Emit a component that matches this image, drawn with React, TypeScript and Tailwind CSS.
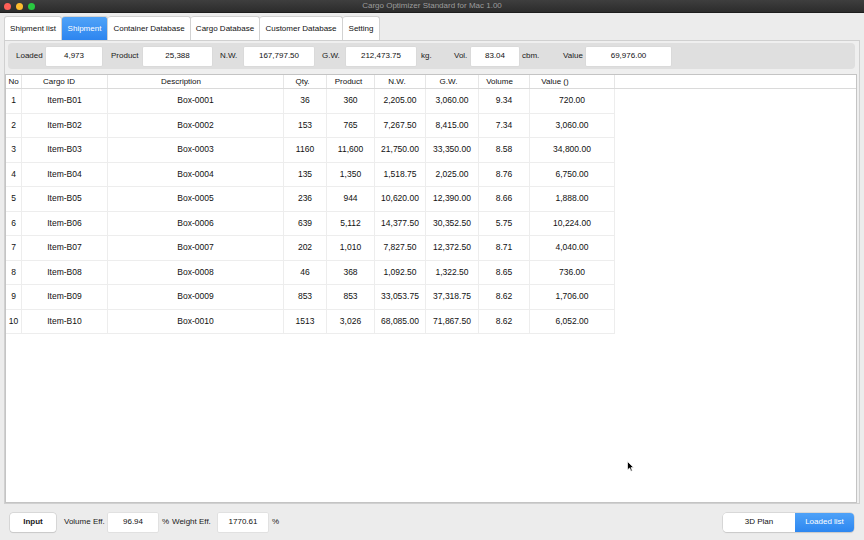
import React from "react";

const rows = [
  ["1", "Item-B01", "Box-0001", "36", "360", "2,205.00", "3,060.00", "9.34", "720.00"],
  ["2", "Item-B02", "Box-0002", "153", "765", "7,267.50", "8,415.00", "7.34", "3,060.00"],
  ["3", "Item-B03", "Box-0003", "1160", "11,600", "21,750.00", "33,350.00", "8.58", "34,800.00"],
  ["4", "Item-B04", "Box-0004", "135", "1,350", "1,518.75", "2,025.00", "8.76", "6,750.00"],
  ["5", "Item-B05", "Box-0005", "236", "944", "10,620.00", "12,390.00", "8.66", "1,888.00"],
  ["6", "Item-B06", "Box-0006", "639", "5,112", "14,377.50", "30,352.50", "5.75", "10,224.00"],
  ["7", "Item-B07", "Box-0007", "202", "1,010", "7,827.50", "12,372.50", "8.71", "4,040.00"],
  ["8", "Item-B08", "Box-0008", "46", "368", "1,092.50", "1,322.50", "8.65", "736.00"],
  ["9", "Item-B09", "Box-0009", "853", "853", "33,053.75", "37,318.75", "8.62", "1,706.00"],
  ["10", "Item-B10", "Box-0010", "1513", "3,026", "68,085.00", "71,867.50", "8.62", "6,052.00"],
];

const headers: { label: string; cls: string }[] = [
  { label: "No", cls: "justify-center" },
  { label: "Cargo ID", cls: "justify-center pr-[11px]" },
  { label: "Description", cls: "justify-center pr-[29px]" },
  { label: "Qty.", cls: "justify-center pr-[5px]" },
  { label: "Product", cls: "justify-center pr-[4px]" },
  { label: "N.W.", cls: "justify-center pr-[6px]" },
  { label: "G.W.", cls: "justify-center pr-[7px]" },
  { label: "Volume", cls: "justify-center pr-[9px]" },
  { label: "Value ()", cls: "justify-center pr-[34px]" },
];

const tabs = [
  { label: "Shipment list", w: "w-[58px]" },
  { label: "Shipment", w: "w-[46px]", active: true },
  { label: "Container Database", w: "w-[83px]" },
  { label: "Cargo Database", w: "w-[69px]" },
  { label: "Customer Database", w: "w-[83px]" },
  { label: "Setting", w: "w-[37px]" },
];

const gridCols = "grid grid-cols-[16px_86px_176px_43px_48px_51px_53px_51px_85px]";

function Field({ value, w }: { value: string; w: string }) {
  return (
    <div className={`${w} h-[19px] bg-white flex items-center justify-center text-[8px] text-[#111] rounded-[1px] shadow-[0_0_0_0.5px_#d6d6d6]`}>
      {value}
    </div>
  );
}

export default function App() {
  return (
    <div
      className="relative w-[864px] h-[540px] bg-[#ececec] flex flex-col overflow-hidden text-[#111]"
      style={{ fontFamily: '"Liberation Sans", Arial, sans-serif' }}
    >
      {/* Title bar */}
      <div className="h-[13px] grid grid-cols-[1fr_auto_1fr] items-center bg-gradient-to-b from-[#3e3e3e] to-[#2c2c2c] border-b border-[#1d1d1d]">
        <div className="flex items-center gap-[5px] pl-[4px]">
          <div className="w-[7px] h-[7px] rounded-full bg-[#fe5f57]" />
          <div className="w-[7px] h-[7px] rounded-full bg-[#febc2e]" />
          <div className="w-[7px] h-[7px] rounded-full bg-[#28c840]" />
        </div>
        <div className="text-[8px] text-[#9c9c9c] leading-none">Cargo Optimizer Standard for Mac 1.00</div>
        <div />
      </div>

      {/* Tabs */}
      <div className="mt-[3px] pl-[4px] flex h-[24px]">
        {tabs.map((t) => (
          <div
            key={t.label}
            className={`${t.w} h-full flex items-center justify-center text-[8px] border-t border-r border-[#d2d2d2] first:border-l rounded-t-[3px] ${
              t.active
                ? "bg-gradient-to-b from-[#4fa3f8] to-[#2d85ef] text-white border-[#3a8ff2]"
                : "bg-white text-[#111]"
            }`}
          >
            {t.label}
          </div>
        ))}
      </div>

      {/* Panel */}
      <div className="mx-[4px] h-[464px] border border-[#d0d0d0] bg-[#efefef] flex flex-col">
        {/* Summary bar */}
        <div className="mt-[2px] ml-[3px] mr-[4px] h-[26px] rounded-[4px] bg-[#dfdfdf] flex items-center pl-[8px] text-[8px] text-[#1a1a1a]">
          <div className="w-[30px]">Loaded</div>
          <Field value="4,973" w="w-[56px]" />
          <div className="ml-[9px] w-[32px]">Product</div>
          <Field value="25,388" w="w-[69px]" />
          <div className="ml-[8px] w-[24px]">N.W.</div>
          <Field value="167,797.50" w="w-[70px]" />
          <div className="ml-[8px] w-[24px]">G.W.</div>
          <Field value="212,473.75" w="w-[70px]" />
          <div className="ml-[5px] w-[33px]">kg.</div>
          <div className="w-[17px]">Vol.</div>
          <Field value="83.04" w="w-[48px]" />
          <div className="ml-[3px] w-[41px]">cbm.</div>
          <div className="w-[23px]">Value</div>
          <Field value="69,976.00" w="w-[85px]" />
        </div>

        {/* Table */}
        <div className="mt-[5px] mr-[2px] flex-1 bg-white border border-[#c4c4c4] flex flex-col">
          <div className="h-[14px] border-b border-[#dadada] flex">
            <div className={`${gridCols}`}>
              {headers.map((h) => (
                <div key={h.label} className={`flex items-center text-[8px] border-r border-[#e6e6e6] ${h.cls}`}>
                  {h.label}
                </div>
              ))}
            </div>
          </div>
          <div className="flex flex-col">
            {rows.map((r) => (
              <div key={r[0]} className={`${gridCols} h-[24.5px] w-fit`}>
                {r.map((c, i) => (
                  <div
                    key={i}
                    className="flex items-center justify-center text-[8.5px] border-r border-b border-[#ededed]"
                  >
                    {c}
                  </div>
                ))}
              </div>
            ))}
          </div>
        </div>
      </div>

      {/* Bottom bar */}
      <div className="flex-1 flex items-center pl-[10px] pr-[10px] text-[8px] text-[#1a1a1a]">
        <div className="w-[46px] h-[19px] bg-white rounded-[3px] flex items-center justify-center font-bold shadow-[0_0_0_0.5px_#c4c4c4,0_1px_1px_rgba(0,0,0,0.12)]">
          Input
        </div>
        <div className="ml-[8px] w-[44px]">Volume Eff.</div>
        <Field value="96.94" w="w-[50px]" />
        <div className="ml-[4px] w-[10px]">%</div>
        <div className="w-[46px]">Weight Eff.</div>
        <Field value="1770.61" w="w-[50px]" />
        <div className="ml-[4px]">%</div>
        <div className="ml-auto flex h-[19px] rounded-[4px] overflow-hidden shadow-[0_0_0_0.5px_#c4c4c4,0_1px_1px_rgba(0,0,0,0.12)]">
          <div className="w-[72px] bg-white flex items-center justify-center text-[#111]">3D Plan</div>
          <div className="w-[59px] bg-gradient-to-b from-[#4ea2f8] to-[#2c86f0] flex items-center justify-center text-white">
            Loaded list
          </div>
        </div>
      </div>

      {/* Mouse cursor */}
      <svg className="absolute left-[627px] top-[461px]" width="7" height="11" viewBox="0 0 7 11">
        <path d="M0.5 0.5 L0.5 9 L2.6 7 L4 10.2 L5.3 9.6 L4 6.6 L6.6 6.6 Z" fill="#000" stroke="#fff" strokeWidth="0.7" />
      </svg>
    </div>
  );
}
